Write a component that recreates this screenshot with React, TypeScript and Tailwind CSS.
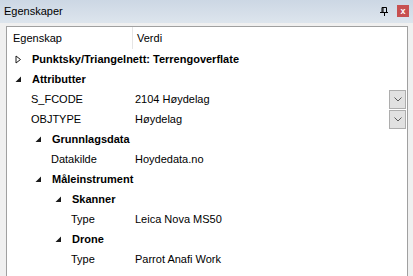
import React from 'react';

type Row = {
  label: string;
  value?: string;
  kind: 'cat' | 'prop';
  indent: string;
  expanded?: boolean;
  dropdown?: boolean;
};

const rows: Row[] = [
  { label: 'Punktsky/Triangelnett: Terrengoverflate', kind: 'cat', indent: 'pl-[8px]', expanded: false },
  { label: 'Attributter', kind: 'cat', indent: 'pl-[8px]', expanded: true },
  { label: 'S_FCODE', value: '2104 Høydelag', kind: 'prop', indent: 'pl-[24px]', dropdown: true },
  { label: 'OBJTYPE', value: 'Høydelag', kind: 'prop', indent: 'pl-[24px]', dropdown: true },
  { label: 'Grunnlagsdata', kind: 'cat', indent: 'pl-[28px]', expanded: true },
  { label: 'Datakilde', value: 'Hoydedata.no', kind: 'prop', indent: 'pl-[44px]' },
  { label: 'Måleinstrument', kind: 'cat', indent: 'pl-[28px]', expanded: true },
  { label: 'Skanner', kind: 'cat', indent: 'pl-[48px]', expanded: true },
  { label: 'Type', value: 'Leica Nova MS50', kind: 'prop', indent: 'pl-[64px]' },
  { label: 'Drone', kind: 'cat', indent: 'pl-[48px]', expanded: true },
  { label: 'Type', value: 'Parrot Anafi Work', kind: 'prop', indent: 'pl-[64px]' },
];

function Arrow({ expanded }: { expanded?: boolean }) {
  return (
    <span className="w-[17px] flex items-center">
      {expanded ? (
        <svg width="7" height="7" viewBox="0 0 7 7">
          <path d="M6 0.5 L6 6 L0.5 6 Z" fill="#1a1a1a" />
        </svg>
      ) : (
        <svg width="7" height="9" viewBox="0 0 7 9">
          <path d="M1 1 L5.5 4.5 L1 8 Z" fill="none" stroke="#1a1a1a" strokeWidth="1" />
        </svg>
      )}
    </span>
  );
}

function Dropdown() {
  return (
    <div className="w-[17px] h-[19px] bg-[#e1e1e1] border border-[#adadad] flex items-center justify-center">
      <svg width="8" height="5" viewBox="0 0 8 5">
        <path d="M0.5 0.5 L4 4 L7.5 0.5" fill="none" stroke="#5a5a5a" strokeWidth="1" />
      </svg>
    </div>
  );
}

export default function App() {
  return (
    <div className="w-[413px] h-[276px] bg-[#f0f0f0] overflow-hidden font-['Liberation_Sans',Arial,sans-serif] text-black">
      {/* title */}
      <div className="h-[23px] bg-gradient-to-b from-[#ccd7e4] to-[#dde5ed] flex items-center pl-[4px] pr-[4px]">
        <span className="text-[11px] flex-1">Egenskaper</span>
        <svg width="8" height="9" viewBox="0 0 8 9" className="mr-[9px]">
          <path d="M2 0.5 H6.5 V5 M2 0.5 V5 M3 0.5 V5" fill="none" stroke="#000" strokeWidth="1" />
          <path d="M0 5.5 H8" stroke="#000" strokeWidth="1" />
          <path d="M4.5 6 V9" stroke="#000" strokeWidth="1" />
        </svg>
        <div className="w-[12px] h-[12px] bg-[#c75050] flex items-center justify-center text-white text-[9px] font-bold leading-none mb-[1px]">
          x
        </div>
      </div>

      <div className="pt-[3px] pl-[6px] pr-[5px]">
        <div className="bg-white border border-[#a0a0a0] h-[260px]">
          <div className="h-[22px] flex items-stretch text-[11px]">
            <div className="w-[126px] pl-[6px] flex items-center border-r border-[#e5e5e5]">Egenskap</div>
            <div className="pl-[4px] flex items-center">Verdi</div>
          </div>
          {rows.map((r, i) => (
            <div key={i} className="h-[20px] flex items-center">
              {r.kind === 'cat' ? (
                <div className={`${r.indent} flex items-center whitespace-nowrap text-[11px] font-bold`}>
                  <Arrow expanded={r.expanded} />
                  <span>{r.label}</span>
                </div>
              ) : (
                <>
                  <div className={`${r.indent} w-[128px] text-[11px] whitespace-nowrap`}>{r.label}</div>
                  <div className="flex-1 text-[11px] whitespace-nowrap">{r.value}</div>
                  {r.dropdown && (
                    <div className="mr-[1px]">
                      <Dropdown />
                    </div>
                  )}
                </>
              )}
            </div>
          ))}
        </div>
      </div>
    </div>
  );
}
